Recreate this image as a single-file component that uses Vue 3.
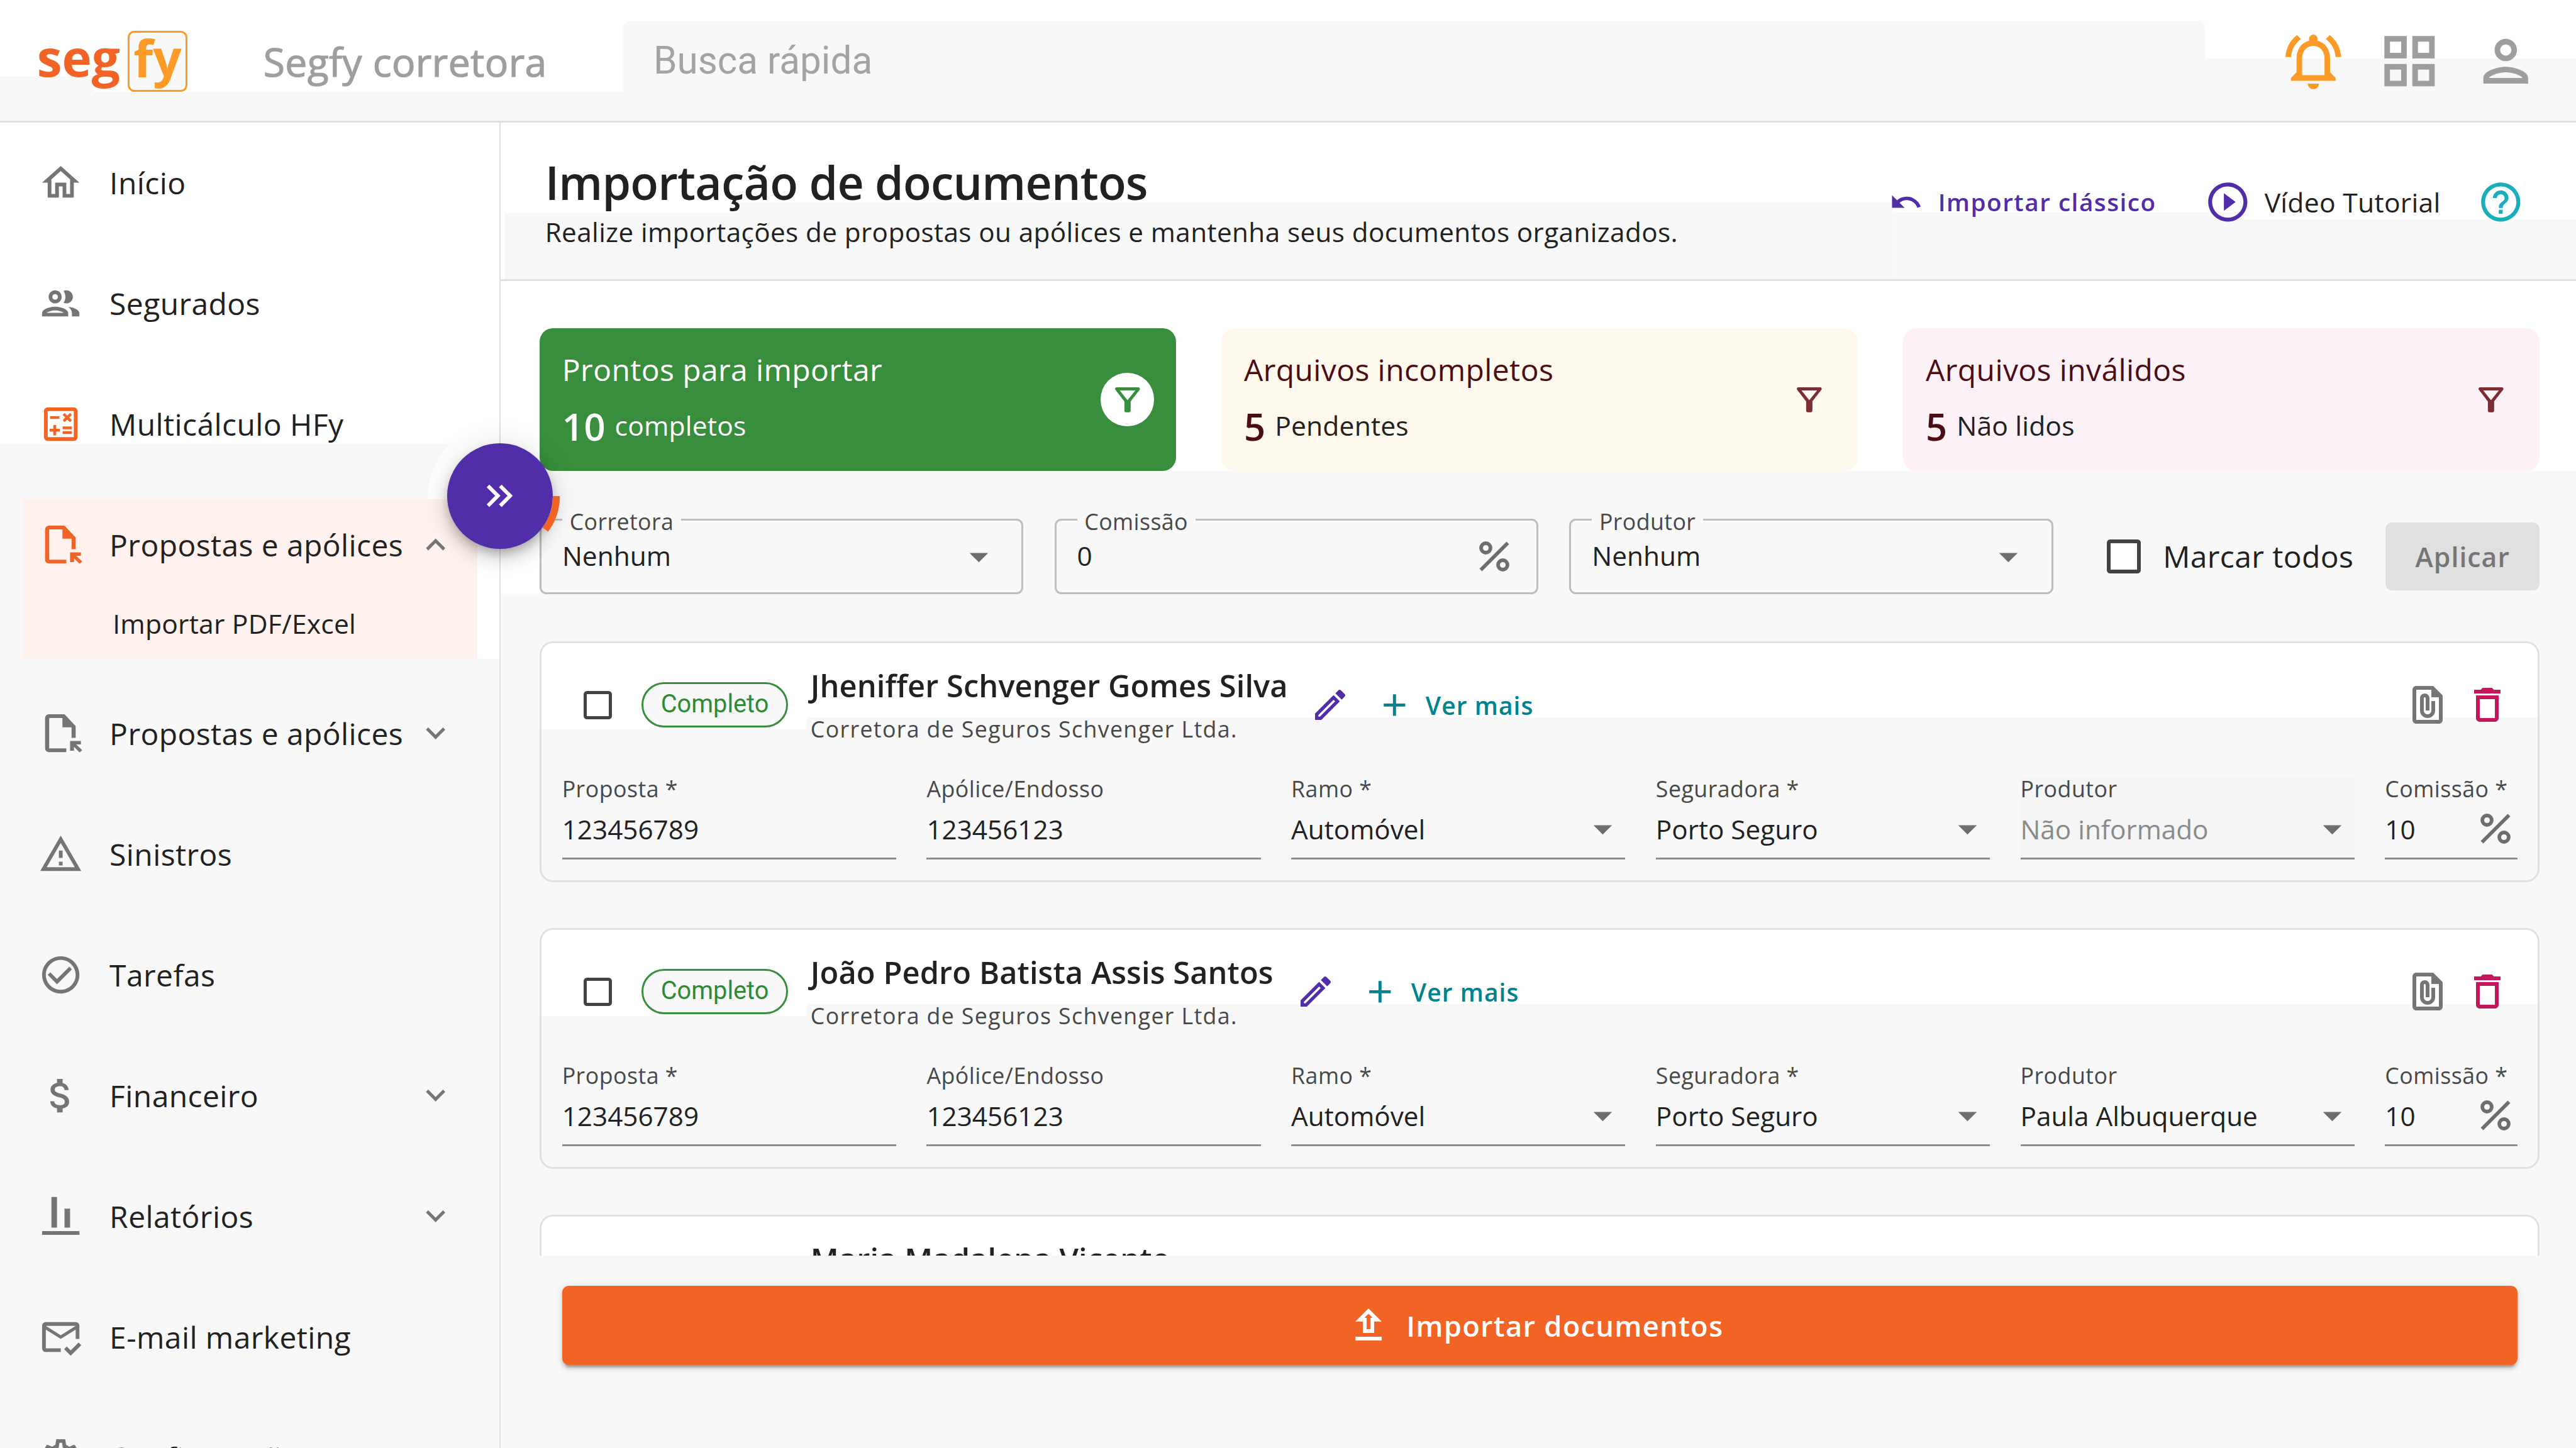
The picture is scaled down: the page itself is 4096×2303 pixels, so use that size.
<template>
  <div class="app">
    <header class="topbar">
      <div class="logo">
        <span class="logo-seg">seg</span>
        <span class="logo-fy">fy</span>
      </div>
      <div class="broker">Segfy corretora</div>
      <div class="search">Busca rápida</div>
      <div class="topbar-icons">
        <svg class="icon icon--bell" viewBox="0 0 24 24"><path :d="icons.bell" /></svg>
        <svg class="icon" viewBox="0 0 24 24"><path :d="icons.grid" /></svg>
        <svg class="icon" viewBox="0 0 24 24"><path :d="icons.person" /></svg>
      </div>
    </header>

    <div class="layout">
      <aside class="sidebar">
        <div
          v-for="(item, index) in menu"
          :key="index"
          class="menu-group"
          :class="{ 'menu-group--active': item.active }"
        >
          <div class="menu-item">
            <svg
              class="menu-icon"
              :class="{ 'menu-icon--accent': item.accent }"
              viewBox="0 0 24 24"
            >
              <path :d="icons[item.icon]" />
            </svg>
            <span class="menu-label">{{ item.label }}</span>
            <svg v-if="item.arrow" class="menu-arrow" viewBox="0 0 24 24">
              <path :d="icons[item.arrow]" />
            </svg>
          </div>
          <div v-for="child in item.children || []" :key="child" class="menu-child">
            {{ child }}
          </div>
        </div>
      </aside>

      <main class="main">
        <div class="page-head">
          <div>
            <h1 class="page-title">Importação de documentos</h1>
            <p class="page-description">
              Realize importações de propostas ou apólices e mantenha seus documentos organizados.
            </p>
          </div>
          <div class="page-actions">
            <a class="classic">
              <svg class="classic-icon" viewBox="0 0 24 24"><path :d="icons.undo" /></svg>
              <span>Importar clássico</span>
            </a>
            <a class="tutorial">
              <svg class="tutorial-icon" viewBox="0 0 24 24"><path :d="icons.play" /></svg>
              <span>Vídeo Tutorial</span>
            </a>
            <svg class="help-icon" viewBox="0 0 24 24"><path :d="icons.help" /></svg>
          </div>
        </div>

        <div class="page-body">
          <div class="statuses">
            <div
              v-for="status in statuses"
              :key="status.type"
              class="status"
              :class="`status--${status.type}`"
            >
              <div class="status-info">
                <div class="status-title">{{ status.title }}</div>
                <div class="status-row">
                  <span class="status-count">{{ status.count }}</span>
                  <span class="status-text">{{ status.text }}</span>
                </div>
              </div>
              <div class="status-filter">
                <svg viewBox="0 0 24 24"><path :d="icons.filter" /></svg>
              </div>
            </div>
          </div>

          <div class="filters">
            <div v-for="filter in filters" :key="filter.label" class="outlined">
              <span class="outlined-label">{{ filter.label }}</span>
              <span class="outlined-value">{{ filter.value }}</span>
              <svg v-if="filter.percent" class="percent" viewBox="0 0 48 48">
                <circle cx="10.5" cy="10.5" r="7.5" />
                <circle cx="37.5" cy="37.5" r="7.5" />
                <path d="M2.5 45.5 45.5 2.5" />
              </svg>
              <svg v-else class="dropdown" viewBox="0 0 24 24"><path d="m7 10 5 5 5-5z" /></svg>
            </div>
            <span class="checkbox checkbox--large"></span>
            <span class="check-all">Marcar todos</span>
            <button class="apply" disabled>Aplicar</button>
          </div>

          <div class="documents">
            <div v-for="(doc, docIndex) in documents" :key="docIndex" class="document">
              <div class="document-head">
                <span class="checkbox"></span>
                <span class="chip"><template v-if="doc.loaded">Completo</template></span>
                <div class="document-person">
                  <div class="document-name">{{ doc.name }}</div>
                  <div v-if="doc.loaded" class="document-broker">
                    Corretora de Seguros Schvenger Ltda.
                  </div>
                </div>
                <template v-if="doc.loaded">
                  <svg class="edit-icon" viewBox="0 0 24 24"><path :d="icons.edit" /></svg>
                  <svg class="plus-icon" viewBox="0 0 24 24">
                    <path d="M19 13h-6v6h-2v-6H5v-2h6V5h2v6h6z" />
                  </svg>
                  <span class="more">Ver mais</span>
                  <div class="document-tools">
                    <svg class="tool-icon" viewBox="0 0 24 24"><path :d="icons.attachment" /></svg>
                    <svg class="tool-icon tool-icon--delete" viewBox="0 0 24 24">
                      <path :d="icons.trash" />
                    </svg>
                  </div>
                </template>
              </div>

              <div v-if="doc.loaded" class="fields">
                <div
                  v-for="field in documentFields(doc)"
                  :key="field.label"
                  class="field"
                  :class="{ 'field--disabled': field.disabled, 'field--short': field.percent }"
                >
                  <div class="field-label">{{ field.label }}</div>
                  <div class="field-value">
                    <span>{{ field.value }}</span>
                    <svg v-if="field.select" class="dropdown" viewBox="0 0 24 24">
                      <path d="m7 10 5 5 5-5z" />
                    </svg>
                    <svg v-if="field.percent" class="percent" viewBox="0 0 48 48">
                      <circle cx="10.5" cy="10.5" r="7.5" />
                      <circle cx="37.5" cy="37.5" r="7.5" />
                      <path d="M2.5 45.5 45.5 2.5" />
                    </svg>
                  </div>
                </div>
              </div>
            </div>
          </div>

          <button class="import">
            <svg class="import-icon" viewBox="0 0 24 24"><path :d="icons.upload" /></svg>
            <span>Importar documentos</span>
          </button>
        </div>
      </main>

      <!-- sidebar toggle with the progress arc behind it -->
      <div class="toggle">
        <div class="toggle-button">
          <svg viewBox="0 0 24 24"><path :d="icons.doubleArrow" /></svg>
        </div>
        <svg class="toggle-arc" viewBox="0 0 72 72">
          <path d="M69.6 36A33.6 33.6 0 0 1 63 56" />
        </svg>
      </div>
    </div>
  </div>
</template>

<script setup>
const icons = {
  bell: 'M12 22c1.1 0 2-.9 2-2h-4c0 1.1.9 2 2 2zm6-6v-5c0-3.07-1.63-5.64-4.5-6.32V4c0-.83-.67-1.5-1.5-1.5s-1.5.67-1.5 1.5v.68C7.64 5.36 6 7.92 6 11v5l-2 2v1h16v-1l-2-2zm-2 1H8v-6c0-2.48 1.51-4.5 4-4.5s4 2.02 4 4.5v6zM7.58 4.08 6.15 2.65C3.75 4.48 2.17 7.3 2.03 10.5h2c.15-2.65 1.51-4.97 3.55-6.42zm12.39 6.42h2c-.15-3.2-1.73-6.02-4.12-7.85l-1.42 1.43c2.02 1.45 3.39 3.77 3.54 6.42z',
  grid: 'M3 3v8h8V3H3zm6 6H5V5h4v4zm-6 4v8h8v-8H3zm6 6H5v-4h4v4zm4-16v8h8V3h-8zm6 6h-4V5h4v4zm-6 4v8h8v-8h-8zm6 6h-4v-4h4v4z',
  person: 'M12 6c1.1 0 2 .9 2 2s-.9 2-2 2-2-.9-2-2 .9-2 2-2m0 10c2.7 0 5.8 1.29 6 2H6c.23-.72 3.31-2 6-2m0-12C9.79 4 8 5.79 8 8s1.79 4 4 4 4-1.79 4-4-1.79-4-4-4zm0 10c-2.67 0-8 1.34-8 4v2h16v-2c0-2.66-5.33-4-8-4z',
  home: 'm12 5.69 5 4.5V18h-2v-6H9v6H7v-7.81l5-4.5M12 3 2 12h3v8h6v-6h2v6h6v-8h3L12 3z',
  group: 'M9 13.75c-2.34 0-7 1.17-7 3.5V19h14v-1.75c0-2.33-4.66-3.5-7-3.5zM4.34 17c.84-.58 2.87-1.25 4.66-1.25s3.82.67 4.66 1.25H4.34zM9 12c1.93 0 3.5-1.57 3.5-3.5S10.93 5 9 5 5.5 6.57 5.5 8.5 7.07 12 9 12zm0-5c.83 0 1.5.67 1.5 1.5S9.83 10 9 10s-1.5-.67-1.5-1.5S8.17 7 9 7zm7.04 6.81c1.16.84 1.96 1.96 1.96 3.44V19h4v-1.75c0-2.02-3.5-3.17-5.96-3.44zM15 12c1.93 0 3.5-1.57 3.5-3.5S16.93 5 15 5c-.54 0-1.04.13-1.5.35.63.89 1 1.98 1 3.15s-.37 2.26-1 3.15c.46.22.96.35 1.5.35z',
  calculate: 'M19 3H5c-1.1 0-2 .9-2 2v14c0 1.1.9 2 2 2h14c1.1 0 2-.9 2-2V5c0-1.1-.9-2-2-2zm0 16H5V5h14v14zM6.25 7.72h5v1.5h-5zM13 15.75h5v1.5h-5zm0-2.5h5v1.5h-5zM8 18h1.5v-2h2v-1.5h-2v-2H8v2H6V16h2zM14.09 10.95l1.41-1.41 1.41 1.41 1.06-1.06-1.41-1.42 1.41-1.41L16.91 6 15.5 7.41 14.09 6l-1.06 1.06 1.41 1.41-1.41 1.42z',
  proposal: 'M5.6 1.7H14L20 8v6.3h-2.2V8.7h-4.9V3.7H5.8V20H15v2H5.6a2 2 0 0 1-2-2V3.7a2 2 0 0 1 2-2zM17 16h5.8v1.9h-2.5l3.2 3-1.4 1.3-3-3.1v2.1H17z',
  warning: 'M12 5.99 19.53 19H4.47L12 5.99M12 2 1 21h22L12 2zm1 14h-2v2h2v-2zm0-6h-2v4h2v-4z',
  check: 'M16.59 7.58 10 14.17l-3.59-3.58L5 12l5 5 8-8zM12 2C6.48 2 2 6.48 2 12s4.48 10 10 10 10-4.48 10-10S17.52 2 12 2zm0 18c-4.42 0-8-3.58-8-8s3.58-8 8-8 8 3.58 8 8-3.58 8-8 8z',
  money: 'M11.8 10.9c-2.27-.59-3-1.2-3-2.15 0-1.09 1.01-1.85 2.7-1.85 1.78 0 2.44.85 2.5 2.1h2.21c-.07-1.72-1.12-3.3-3.21-3.81V3h-3v2.16c-1.94.42-3.5 1.68-3.5 3.61 0 2.31 1.91 3.46 4.7 4.13 2.5.6 3 1.48 3 2.41 0 .69-.49 1.79-2.7 1.79-2.06 0-2.87-.92-2.98-2.1h-2.2c.12 2.19 1.76 3.42 3.68 3.83V21h3v-2.15c1.95-.37 3.5-1.5 3.5-3.55 0-2.84-2.43-3.81-4.7-4.4z',
  chart: 'M2 19.9h20v2H2zM7 1.6h3V18H7zM14 7.8h3V18h-3z',
  mail: 'M12 18H4V8l8 5 8-5v5h2V6c0-1.1-.9-2-2-2H4c-1.1 0-2 .9-2 2v12c0 1.1.9 2 2 2h8v-2zm8-12-8 5-8-5h16zm-2.66 16-3.54-3.54 1.41-1.41 2.12 2.12 4.24-4.24L23 16.34 17.34 22z',
  settings: 'M19.43 12.98c.04-.32.07-.64.07-.98s-.03-.66-.07-.98l2.11-1.65c.19-.15.24-.42.12-.64l-2-3.46c-.09-.16-.26-.25-.44-.25-.06 0-.12.01-.17.03l-2.49 1c-.52-.4-1.08-.73-1.69-.98l-.38-2.65C14.46 2.18 14.25 2 14 2h-4c-.25 0-.46.18-.49.42l-.38 2.65c-.61.25-1.17.59-1.69.98l-2.49-1c-.06-.02-.12-.03-.18-.03-.17 0-.34.09-.43.25l-2 3.46c-.13.22-.07.49.12.64l2.11 1.65c-.04.32-.07.65-.07.98s.03.66.07.98l-2.11 1.65c-.19.15-.24.42-.12.64l2 3.46c.09.16.26.25.44.25.06 0 .12-.01.17-.03l2.49-1c.52.4 1.08.73 1.69.98l.38 2.65c.03.24.24.42.49.42h4c.25 0 .46-.18.49-.42l.38-2.65c.61-.25 1.17-.59 1.69-.98l2.49 1c.06.02.12.03.18.03.17 0 .34-.09.43-.25l2-3.46c.12-.22.07-.49-.12-.64l-2.11-1.65zm-1.98-1.71c.04.31.05.52.05.73s-.02.43-.05.73l-.14 1.13.89.7 1.08.84-.7 1.21-1.27-.51-1.04-.42-.9.68c-.43.32-.84.56-1.25.73l-1.06.43-.16 1.13-.2 1.35h-1.4l-.19-1.35-.16-1.13-1.06-.43c-.43-.18-.83-.41-1.23-.71l-.91-.7-1.06.43-1.27.51-.7-1.21 1.08-.84.89-.7-.14-1.13c-.03-.31-.05-.54-.05-.74s.02-.43.05-.73l.14-1.13-.89-.7-1.08-.84.7-1.21 1.27.51 1.04.42.9-.68c.43-.32.84-.56 1.25-.73l1.06-.43.16-1.13.2-1.35h1.39l.19 1.35.16 1.13 1.06.43c.43.18.83.41 1.23.71l.91.7 1.06-.43 1.27-.51.7 1.21-1.07.85-.89.7.14 1.13zM12 8c-2.21 0-4 1.79-4 4s1.79 4 4 4 4-1.79 4-4-1.79-4-4-4zm0 6c-1.1 0-2-.9-2-2s.9-2 2-2 2 .9 2 2-.9 2-2 2z',
  expandMore: 'M16.59 8.59 12 13.17 7.41 8.59 6 10l6 6 6-6z',
  expandLess: 'm12 8-6 6 1.41 1.41L12 10.83l4.59 4.58L18 14z',
  undo: 'M12.5 8c-2.65 0-5.05.99-6.9 2.6L2 7v9h9l-3.62-3.62c1.39-1.16 3.16-1.88 5.12-1.88 3.54 0 6.55 2.31 7.6 5.5l2.37-.78C21.08 11.03 17.15 8 12.5 8z',
  play: 'm10 16.5 6-4.5-6-4.5v9zM12 2C6.48 2 2 6.48 2 12s4.48 10 10 10 10-4.48 10-10S17.52 2 12 2zm0 18c-4.41 0-8-3.59-8-8s3.59-8 8-8 8 3.59 8 8-3.59 8-8 8z',
  help: 'M11 18h2v-2h-2v2zm1-16C6.48 2 2 6.48 2 12s4.48 10 10 10 10-4.48 10-10S17.52 2 12 2zm0 18c-4.41 0-8-3.59-8-8s3.59-8 8-8 8 3.59 8 8-3.59 8-8 8zm0-14c-2.21 0-4 1.79-4 4h2c0-1.1.9-2 2-2s2 .9 2 2c0 2-3 1.75-3 5h2c0-2.25 3-2.5 3-5 0-2.21-1.79-4-4-4z',
  filter: 'M7 6h10l-5.01 6.3L7 6zm-2.75-.39C6.27 8.2 10 13 10 13v6c0 .55.45 1 1 1h2c.55 0 1-.45 1-1v-6s3.72-4.8 5.74-7.39c.51-.66.04-1.61-.79-1.61H5.04c-.83 0-1.3.95-.79 1.61z',
  edit: 'm14.06 9.02.92.92L5.92 19H5v-.92l9.06-9.06M17.66 3c-.25 0-.51.1-.7.29l-1.83 1.83 3.75 3.75 1.83-1.83c.39-.39.39-1.02 0-1.41l-2.34-2.34c-.2-.2-.45-.29-.71-.29zm-3.6 3.19L3 17.25V21h3.75L17.81 9.94l-3.75-3.75z',
  attachment: 'M15 2H6c-1.1 0-2 .9-2 2v16c0 1.1.9 2 2 2h12c1.1 0 2-.9 2-2V7l-5-5zM6 20V4h8v4h4v12H6zm10-10v5c0 2.21-1.79 4-4 4s-4-1.79-4-4V8.5C8 7.12 9.12 6 10.5 6S13 7.12 13 8.5V15h-2V8.5c0-.28-.22-.5-.5-.5s-.5.22-.5.5V15c0 1.1.9 2 2 2s2-.9 2-2v-5h2z',
  trash: 'M6 19c0 1.1.9 2 2 2h8c1.1 0 2-.9 2-2V7H6v12zM8 9h8v10H8V9zm7.5-5-1-1h-5l-1 1H5v2h14V4z',
  upload: 'M9 16h6v-6h4l-7-7-7 7h4v6zm3-10.17L14.17 8H13v6h-2V8H9.83L12 5.83zM5 18h14v2H5z',
  doubleArrow: 'M6.41 6 5 7.41 9.58 12 5 16.59 6.41 18l6-6zM13 6l-1.41 1.41L16.17 12l-4.58 4.59L13 18l6-6z',
}

const menu = [
  { label: 'Início', icon: 'home' },
  { label: 'Segurados', icon: 'group' },
  { label: 'Multicálculo HFy', icon: 'calculate', accent: true },
  {
    label: 'Propostas e apólices',
    icon: 'proposal',
    accent: true,
    active: true,
    arrow: 'expandLess',
    children: ['Importar PDF/Excel'],
  },
  { label: 'Propostas e apólices', icon: 'proposal', arrow: 'expandMore' },
  { label: 'Sinistros', icon: 'warning' },
  { label: 'Tarefas', icon: 'check' },
  { label: 'Financeiro', icon: 'money', arrow: 'expandMore' },
  { label: 'Relatórios', icon: 'chart', arrow: 'expandMore' },
  { label: 'E-mail marketing', icon: 'mail' },
  { label: 'Configurações', icon: 'settings' },
]

const statuses = [
  { type: 'ready', title: 'Prontos para importar', count: 10, text: 'completos' },
  { type: 'pending', title: 'Arquivos incompletos', count: 5, text: 'Pendentes' },
  { type: 'invalid', title: 'Arquivos inválidos', count: 5, text: 'Não lidos' },
]

const filters = [
  { label: 'Corretora', value: 'Nenhum' },
  { label: 'Comissão', value: '0', percent: true },
  { label: 'Produtor', value: 'Nenhum' },
]

const documents = [
  { name: 'Jheniffer Schvenger Gomes Silva', producer: '', loaded: true },
  { name: 'João Pedro Batista Assis Santos', producer: 'Paula Albuquerque', loaded: true },
  { name: 'Maria Madalena Vicente', producer: '', loaded: false },
]

function documentFields(doc) {
  return [
    { label: 'Proposta *', value: '123456789' },
    { label: 'Apólice/Endosso', value: '123456123' },
    { label: 'Ramo *', value: 'Automóvel', select: true },
    { label: 'Seguradora *', value: 'Porto Seguro', select: true },
    {
      label: 'Produtor',
      value: doc.producer || 'Não informado',
      select: true,
      disabled: !doc.producer,
    },
    { label: 'Comissão *', value: '10', percent: true },
  ]
}
</script>

<style>
/* 1rem is one pixel of the 1536px wide layout */
html {
  font-size: calc(100vw / 1536);
}

body {
  overflow: hidden;
}
</style>

<style scoped>
.app {
  display: flex;
  flex-direction: column;
  height: 100vh;
  overflow: hidden;
  background: #f8f8f8;
  color: #212121;
  font-family: 'Open Sans', 'Noto Sans', sans-serif;
  font-size: 16rem;
  letter-spacing: 0.15rem;
}

svg {
  display: block;
  flex: none;
  fill: currentColor;
}

button {
  border: 0;
  padding: 0;
  font-family: inherit;
}

.topbar {
  flex: none;
  display: flex;
  align-items: center;
  box-sizing: border-box;
  height: 73.1rem;
  padding: 0 22rem;
  border-bottom: 3px solid #e0e0e0;
  background:
    linear-gradient(#f8f8f8, #f8f8f8) 0 45.4rem / 56rem 30rem no-repeat,
    linear-gradient(#f8f8f8, #f8f8f8) 0 54.8rem / 1320rem 20rem no-repeat,
    linear-gradient(#f8f8f8, #f8f8f8) 1314.8rem 35rem / 230rem 40rem no-repeat,
    #fff;
}

.logo {
  display: flex;
  align-items: center;
  width: 90rem;
  padding-top: 1rem;
  font-size: 30rem;
  font-weight: 700;
  line-height: 30rem;
  letter-spacing: 0;
}

.logo-seg {
  width: 54.1rem;
  padding-bottom: 4.4rem;
  color: #f26426;
}

.logo-fy {
  box-sizing: border-box;
  width: 35.7rem;
  height: 36.4rem;
  border: 3px solid #fb9a27;
  border-radius: 4rem;
  background: #f8f8f8;
  color: #fb9a27;
  text-align: center;
  line-height: 29.4rem;
}

.broker {
  width: 214.6rem;
  padding: 1rem 0 0 45rem;
  font-size: 23.4rem;
  color: #9e9e9e;
  -webkit-text-stroke: 0.45rem #9e9e9e;
  white-space: nowrap;
}

.search {
  width: 943.3rem;
  height: 47.6rem;
  box-sizing: border-box;
  padding-left: 18rem;
  border-radius: 4rem;
  background: #f8f8f8;
  font-family: Roboto, sans-serif;
  font-size: 22.6rem;
  line-height: 48rem;
  letter-spacing: 0;
  color: #a3a3a3;
}

.topbar-icons {
  display: flex;
  gap: 17.4rem;
  margin-left: auto;
  padding-top: 1rem;
  color: #9e9e9e;
}

.icon {
  width: 40rem;
  height: 40rem;
}

.icon--bell {
  color: #fb9a27;
}

.layout {
  position: relative;
  flex: 1;
  display: flex;
  min-height: 0;
}

.sidebar {
  flex: none;
  box-sizing: border-box;
  width: 298.6rem;
  overflow: hidden;
  border-right: 2px solid #e0e0e0;
  background:
    radial-gradient(circle 43rem at 298rem 222.5rem, #fff 99%, transparent 100%),
    linear-gradient(#fff, #fff) 100% 191rem / 14rem 129rem no-repeat,
    linear-gradient(#fff 191.6rem, #f8f8f8 191.6rem);
}

.menu-item {
  display: flex;
  align-items: center;
  height: 72rem;
  padding-left: 22.8rem;
  font-size: 18rem;
}

.menu-icon {
  width: 26.7rem;
  height: 26.7rem;
  margin-right: 15.8rem;
  color: #757575;
}

.menu-icon--accent {
  color: #f26426;
}

.menu-label {
  width: 183rem;
  white-space: nowrap;
}

.menu-arrow {
  width: 23rem;
  height: 23rem;
  color: #757575;
}

.menu-group--active {
  width: 271.2rem;
  margin: 8.8rem 0 8.8rem 13.4rem;
  background: #fff1ed;
}

.menu-group--active .menu-item {
  height: 54rem;
  padding-left: 9.4rem;
}

.menu-child {
  height: 40.6rem;
  padding-left: 53.8rem;
  font-size: 16rem;
  letter-spacing: 0.07rem;
  line-height: 39.8rem;
}

.main {
  flex: 1;
  display: flex;
  flex-direction: column;
  min-width: 0;
}

.page-head {
  display: flex;
  justify-content: space-between;
  box-sizing: border-box;
  height: 94.5rem;
  padding: 17.4rem 31rem 0 26.4rem;
  border-bottom: 3px solid #e0e0e0;
  background:
    linear-gradient(#f8f8f8, #f8f8f8) 2rem 54rem / 140rem 50rem no-repeat,
    linear-gradient(#f8f8f8, #f8f8f8) 142rem 47.6rem / 688rem 50rem no-repeat,
    linear-gradient(#f8f8f8, #f8f8f8) 830rem 53.4rem / 206rem 50rem no-repeat,
    linear-gradient(#f8f8f8, #f8f8f8) 1036rem 57.6rem / 300rem 50rem no-repeat,
    #fff;
}

.page-title {
  margin: 0;
  font-size: 27.5rem;
  font-weight: 600;
  line-height: 36.6rem;
  letter-spacing: -0.3rem;
}

.page-description {
  margin: 0;
  font-size: 15.84rem;
  line-height: 22.4rem;
}

.page-actions {
  display: flex;
  align-items: center;
  height: 60rem;
}

.classic,
.tutorial {
  display: flex;
  align-items: center;
}

.classic {
  gap: 9rem;
  margin-right: 28.5rem;
  color: #512da8;
  font-size: 14.5rem;
  font-weight: 600;
  letter-spacing: 0.57rem;
}

.classic-icon {
  width: 20rem;
  height: 20rem;
}

.tutorial {
  gap: 8rem;
  margin-right: 21.8rem;
  letter-spacing: 0.1rem;
}

.tutorial-icon {
  color: #512da8;
}

.tutorial-icon,
.help-icon {
  width: 28rem;
  height: 28rem;
}

.help-icon {
  color: #1cadbd;
}

.page-body {
  flex: 1;
  display: flex;
  flex-direction: column;
  padding: 28rem 21.6rem 0 23.2rem;
  background:
    linear-gradient(#fff, #fff) 0 0 / 100% 113.4rem no-repeat,
    linear-gradient(#fff, #fff) 0 100rem / 24rem 86.6rem no-repeat,
    #f8f8f8;
}

.statuses {
  display: flex;
  gap: 27rem;
}

.status {
  flex: 1;
  display: flex;
  align-items: center;
  justify-content: space-between;
  box-sizing: border-box;
  height: 85.4rem;
  padding: 0 13.4rem;
  border-radius: 8rem;
  color: #4a0d14;
}

.status--ready {
  background: #388e3c;
  color: #fff;
}

.status--pending {
  background: #fff8ec;
}

.status--invalid {
  background: #fdf1f8;
}

.status-info {
  padding-top: 1.4rem;
}

.status-title {
  font-size: 18rem;
  line-height: 26rem;
}

.status-row {
  display: flex;
  align-items: center;
  gap: 5.5rem;
  margin-top: 4.2rem;
}

.status-count {
  font-size: 22.4rem;
  font-weight: 600;
  line-height: 33rem;
}

.status-text {
  padding-bottom: 1.5rem;
  letter-spacing: 0.05rem;
  color: #212121;
}

.status--ready .status-text {
  color: #fff;
}

.status-filter {
  display: flex;
  align-items: center;
  justify-content: center;
  width: 31.6rem;
  height: 31.6rem;
  border-radius: 50%;
  color: #7a2d33;
}

.status--ready .status-filter {
  background: #fff;
  color: #388e3c;
}

.status-filter svg {
  width: 22.4rem;
  height: 22.4rem;
}

.filters {
  display: flex;
  align-items: center;
  margin-top: 28.5rem;
}

.outlined {
  position: relative;
  display: flex;
  align-items: center;
  justify-content: space-between;
  box-sizing: border-box;
  width: 288.5rem;
  height: 44.9rem;
  margin-right: 18.5rem;
  padding: 0 12.3rem;
  border: 3px solid #bdbdbd;
  border-radius: 4rem;
}

.outlined-label {
  position: absolute;
  top: -8.7rem;
  left: 12.3rem;
  padding: 0 4.4rem;
  background: #f8f8f8;
  font-size: 13.4rem;
  line-height: 18rem;
  color: #484848;
}

.outlined-value {
  padding-bottom: 1.6rem;
  font-size: 15.9rem;
  letter-spacing: 0;
}

.dropdown {
  width: 26.6rem;
  height: 26.6rem;
  color: #6e6e6e;
}

.percent {
  width: 18rem;
  height: 18rem;
  margin-right: 4rem;
  fill: none;
  stroke: #6e6e6e;
  stroke-width: 5.8;
}

.checkbox {
  box-sizing: border-box;
  flex: none;
  width: 17rem;
  height: 17rem;
  border: 5px solid #424242;
  border-radius: 2rem;
  background: #fff;
}

.checkbox--large {
  width: 20.3rem;
  height: 20.3rem;
  margin: 0 13.2rem 0 13.4rem;
  border-width: 6px;
}

.check-all {
  padding-bottom: 0.6rem;
  font-size: 18rem;
}

.apply {
  width: 92rem;
  height: 40.3rem;
  margin-left: auto;
  border-radius: 4rem;
  background: #e0e0e0;
  color: #757575;
  font-size: 16rem;
  font-weight: 600;
  letter-spacing: 0.4rem;
}

.documents {
  display: flex;
  flex-direction: column;
  gap: 27.7rem;
  height: 366.2rem;
  margin-top: 28.3rem;
  overflow: hidden;
}

.document {
  flex: none;
  box-sizing: border-box;
  height: 143.3rem;
  padding: 11.2rem 12.2rem 0;
  border: 3px solid #e0e0e0;
  border-radius: 8rem;
  background:
    linear-gradient(#fff, #fff) 0 0 / 158rem 51.5rem no-repeat,
    linear-gradient(#fff, #fff) 158rem 0 / 100% 44.3rem no-repeat,
    #f8f8f8;
}

.document-head {
  display: flex;
  align-items: center;
  height: 51rem;
  padding: 0 4.4rem 0 12.7rem;
}

.chip {
  box-sizing: border-box;
  width: 87.6rem;
  height: 27rem;
  margin: 0 13.3rem 0 17.6rem;
  border: 3px solid #388e3c;
  border-radius: 14rem;
  background: #f8f8f8;
  color: #2e8b34;
  font-family: Roboto, sans-serif;
  font-size: 14.9rem;
  letter-spacing: 0;
  line-height: 24rem;
  text-align: center;
}

.document-person {
  height: 51rem;
}

.document-name {
  font-size: 18.3rem;
  font-weight: 600;
  line-height: 28.4rem;
  letter-spacing: 0.03rem;
}

.document-broker {
  font-size: 13.4rem;
  line-height: 22.8rem;
  letter-spacing: 0.51rem;
  color: #484848;
}

.edit-icon {
  width: 24rem;
  height: 24rem;
  margin-left: 13.2rem;
  color: #512da8;
}

.plus-icon {
  width: 22rem;
  height: 22rem;
  margin: 0 7.6rem 0 15.4rem;
  color: #00838f;
}

.more {
  color: #00838f;
  font-size: 14.6rem;
  font-weight: 600;
  letter-spacing: 0.4rem;
}

.document-tools {
  display: flex;
  gap: 8.8rem;
  margin-left: auto;
}

.tool-icon {
  width: 27rem;
  height: 27rem;
  color: #757575;
}

.tool-icon--delete {
  color: #c2185b;
}

.fields {
  display: flex;
  gap: 18.2rem;
  margin-top: 17.6rem;
}

.field {
  flex: 1;
  min-width: 0;
  border-bottom: 3px solid #8c8c8c;
}

.field--short {
  flex: none;
  width: 79rem;
}

.field--disabled {
  background: #f5f5f5;
}

.field-label {
  font-size: 13.4rem;
  line-height: 13.6rem;
  letter-spacing: 0.18rem;
  color: #484848;
  white-space: nowrap;
}

.field-value {
  display: flex;
  align-items: center;
  justify-content: space-between;
  height: 34.3rem;
  font-size: 15.85rem;
  letter-spacing: 0;
}

.field--disabled .field-value span {
  color: #8a8a8a;
}

.import {
  display: flex;
  align-items: center;
  justify-content: center;
  gap: 9rem;
  height: 47.3rem;
  margin: 18rem 13.4rem 0;
  padding-right: 6rem;
  border-radius: 4rem;
  background: #f26426;
  box-shadow: 0 3rem 1rem -2rem rgba(0, 0, 0, 0.2), 0 2rem 2rem rgba(0, 0, 0, 0.14), 0 1rem 5rem rgba(0, 0, 0, 0.12);
  color: #fff;
  font-size: 17rem;
  font-weight: 600;
  letter-spacing: 0.45rem;
}

.import-icon {
  width: 27rem;
  height: 27rem;
}

.toggle {
  position: absolute;
  top: 186.7rem;
  left: 262rem;
  width: 72rem;
  height: 72rem;
}

.toggle-arc {
  width: 72rem;
  height: 72rem;
  position: relative;
  fill: none;
  stroke: #f26426;
  stroke-width: 4.2;
}

.toggle-button {
  position: absolute;
  top: 4.5rem;
  left: 4.5rem;
  display: flex;
  align-items: center;
  justify-content: center;
  width: 63rem;
  height: 63rem;
  border-radius: 50%;
  background: #512da8;
  box-shadow: 0 3rem 5rem -1rem rgba(0, 0, 0, 0.2), 0 6rem 10rem rgba(0, 0, 0, 0.14), 0 1rem 18rem rgba(0, 0, 0, 0.12);
  color: #fff;
}

.toggle-button svg {
  width: 26.7rem;
  height: 26.7rem;
}
</style>
